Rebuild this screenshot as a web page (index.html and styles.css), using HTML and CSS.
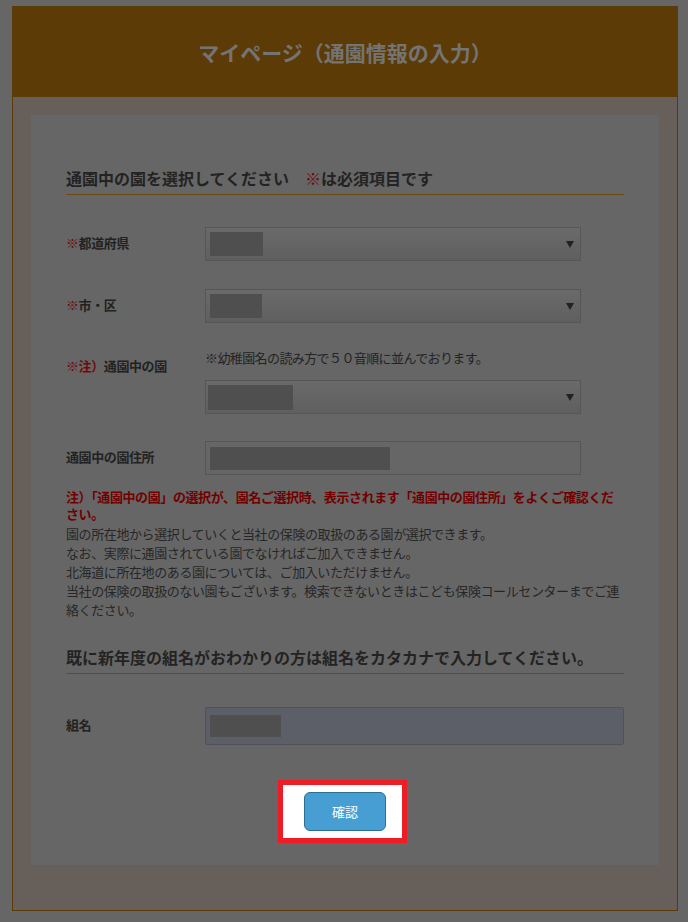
FILE: index.html
```html
<!DOCTYPE html>
<html lang="ja">
<head>
    <meta charset="UTF-8">
    <meta name="viewport" content="width=device-width, initial-scale=1.0">
    <title>マイページ（通園情報の入力）</title>
    <link rel="stylesheet" href="styles.css">
</head>
<body>
    <div class="frame">
        <div class="header">
            <h1>マイページ（通園情報の入力）</h1>
        </div>
        <div class="main">
            <div class="panel">
                <h2 class="section-title">通園中の園を選択してください　<span class="req">※</span>は必須項目です</h2>

                <div class="field-row first">
                    <div class="field-label"><span class="req">※</span>都道府県</div>
                    <div class="field-input">
                        <div class="select">
                            <span class="redact redact-pref"></span>
                            <span class="arrow"></span>
                        </div>
                    </div>
                </div>

                <div class="field-row">
                    <div class="field-label"><span class="req">※</span>市・区</div>
                    <div class="field-input">
                        <div class="select">
                            <span class="redact redact-city"></span>
                            <span class="arrow"></span>
                        </div>
                    </div>
                </div>

                <div class="field-row top">
                    <div class="field-label"><span class="req">※注）</span>通園中の園</div>
                    <div class="field-input">
                        <p class="field-note">※幼稚園名の読み方で５０音順に並んでおります。</p>
                        <div class="select">
                            <span class="redact redact-school"></span>
                            <span class="arrow"></span>
                        </div>
                    </div>
                </div>

                <div class="field-row address">
                    <div class="field-label">通園中の園住所</div>
                    <div class="field-input">
                        <div class="text-box">
                            <span class="redact redact-address"></span>
                        </div>
                    </div>
                </div>

                <p class="warning">注）「通園中の園」の選択が、園名ご選択時、表示されます「通園中の園住所」をよくご確認ください。</p>
                <p class="info">
                    園の所在地から選択していくと当社の保険の取扱のある園が選択できます。<br>
                    なお、実際に通園されている園でなければご加入できません。<br>
                    北海道に所在地のある園については、ご加入いただけません。<br>
                    当社の保険の取扱のない園もございます。検索できないときはこども保険コールセンターまでご連絡ください。
                </p>

                <h2 class="section-title second">既に新年度の組名がおわかりの方は組名をカタカナで入力してください。</h2>

                <div class="field-row class-row">
                    <div class="field-label">組名</div>
                    <div class="field-input wide">
                        <div class="text-box filled">
                            <span class="redact redact-class"></span>
                        </div>
                    </div>
                </div>

                <div class="actions">
                    <div class="highlight">
                        <button class="confirm-btn" type="button">確認</button>
                    </div>
                </div>
            </div>
        </div>
    </div>
</body>
</html>
```

FILE: styles.css
```css
* {
    box-sizing: border-box;
}

body {
    margin: 0;
    padding: 6px 10px 11px 12px;
    background: #666;
    font-family: "Noto Sans CJK JP", "Noto Sans", sans-serif;
    color: #222;
}

.frame {
    border: 1px solid #5a3a08;
    background: #67605a;
}

.header {
    height: 90px;
    background: #5c3b07;
    display: flex;
    align-items: center;
    justify-content: center;
}

.header h1 {
    margin: 0;
    font-size: 21px;
    line-height: 1;
    font-weight: bold;
    color: #747474;
}

.main {
    padding: 18px 18px 45px;
}

.panel {
    background: #666;
    padding: 51px 35px 22px;
}

.section-title {
    margin: 0;
    font-size: 16px;
    line-height: 24px;
    font-weight: bold;
    color: #232323;
    padding-bottom: 4px;
    border-bottom: 1px solid #6a4a12;
}

.section-title.second {
    margin-top: 26px;
}

.req {
    color: #700a0a;
}

.field-row {
    display: flex;
    align-items: center;
    margin-top: 28px;
}

.field-row.first {
    margin-top: 32px;
}

.field-row.top {
    align-items: flex-start;
    margin-top: 25px;
}

.field-row.top .field-label {
    margin-top: 8px;
}

.field-row.address {
    margin-top: 27px;
}

.field-row.class-row {
    margin-top: 33px;
}

.field-label {
    width: 139px;
    flex-shrink: 0;
    font-size: 13px;
    line-height: 19px;
    font-weight: bold;
    letter-spacing: -0.4px;
    padding-bottom: 3px;
}

.field-input {
    width: 376px;
}

.field-input.wide {
    width: auto;
    flex: 1;
}

.field-note {
    margin: 0 0 13px;
    font-size: 13px;
    line-height: 19px;
    letter-spacing: -0.6px;
    color: #232323;
}

.select {
    height: 34px;
    border: 1px solid #565656;
    background: linear-gradient(#6a6a6a, #5f5f5f);
    display: flex;
    align-items: center;
    padding: 0 6px 0 4px;
}

.text-box {
    height: 34px;
    border: 1px solid #565656;
    background: #666;
    display: flex;
    align-items: center;
    padding: 0 4px;
}

.text-box.filled {
    height: 38px;
    background: #5c5f68;
    border-color: #50525a;
    border-radius: 2px;
}

.redact {
    display: block;
    background: #4f4f4f;
    height: 24px;
}

.redact-pref {
    width: 53px;
}

.redact-city {
    width: 52px;
}

.redact-school {
    width: 85px;
    height: 25px;
    margin-left: -2px;
}

.redact-address {
    width: 180px;
    height: 23px;
}

.redact-class {
    width: 71px;
    height: 22px;
}

.arrow {
    margin-left: auto;
    width: 0;
    height: 0;
    border-left: 4px solid transparent;
    border-right: 4px solid transparent;
    border-top: 7px solid #222;
}

.warning {
    margin: 13px 0 0;
    font-size: 13px;
    line-height: 17px;
    font-weight: bold;
    letter-spacing: -0.4px;
    color: #720000;
}

.info {
    margin: 2px 0 0;
    font-size: 13px;
    line-height: 19px;
    letter-spacing: -0.4px;
    color: #262626;
}

.actions {
    margin-top: 35px;
    text-align: center;
}

.highlight {
    display: inline-block;
    border: 5px solid #ee1c24;
    background: #fff;
    padding: 7px 16px 7px 21px;
    margin-right: 5px;
}

.confirm-btn {
    display: block;
    width: 82px;
    height: 39px;
    background: #469ed2;
    border: 1px solid #2d6e94;
    border-radius: 6px;
    color: #fff;
    font-family: "Noto Sans CJK JP", "Noto Sans", sans-serif;
    font-size: 13px;
    cursor: pointer;
}
```
